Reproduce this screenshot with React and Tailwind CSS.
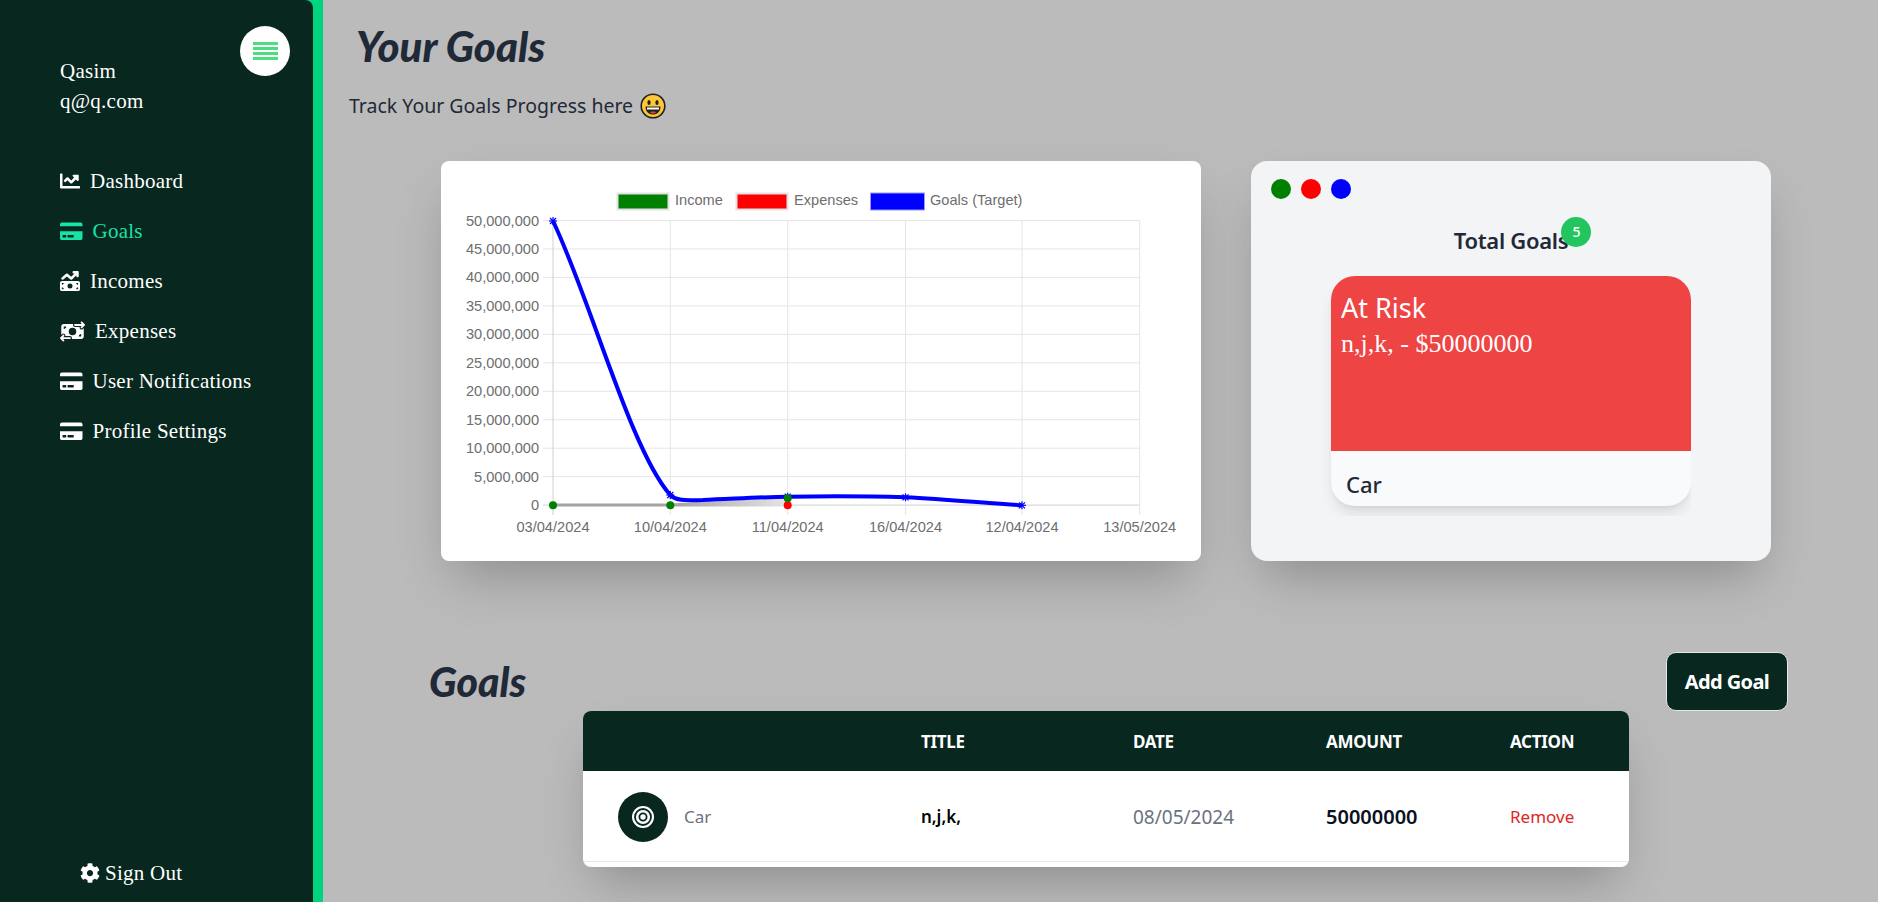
import { FaChartLine, FaCreditCard, FaCog } from "react-icons/fa";
import { FaMoneyBillTrendUp, FaMoneyBillTransfer } from "react-icons/fa6";

const navItems = [
    { label: "Dashboard", icon: FaChartLine, size: 20 },
    { label: "Goals", icon: FaCreditCard, size: 22.5, active: true },
    { label: "Incomes", icon: FaMoneyBillTrendUp, size: 20 },
    { label: "Expenses", icon: FaMoneyBillTransfer, size: 25 },
    { label: "User Notifications", icon: FaCreditCard, size: 22.5 },
    { label: "Profile Settings", icon: FaCreditCard, size: 22.5 },
];

const xTicks = [
    { x: 112, label: "03/04/2024" },
    { x: 229.3, label: "10/04/2024" },
    { x: 346.7, label: "11/04/2024" },
    { x: 464.5, label: "16/04/2024" },
    { x: 581, label: "12/04/2024" },
    { x: 698.7, label: "13/05/2024" },
];

const yTicks = ["50,000,000", "45,000,000", "40,000,000", "35,000,000", "30,000,000", "25,000,000", "20,000,000", "15,000,000", "10,000,000", "5,000,000", "0"];

const goalPoints = [
    [112, 60],
    [229.3, 334],
    [346.7, 335.7],
    [464.5, 336.3],
    [581, 344.3],
];

function Star({ x, y }) {
    return (
        <g stroke="#0000ff" strokeWidth="1.2">
            <line x1={x - 4} y1={y} x2={x + 4} y2={y} />
            <line x1={x} y1={y - 4} x2={x} y2={y + 4} />
            <line x1={x - 3} y1={y - 3} x2={x + 3} y2={y + 3} />
            <line x1={x - 3} y1={y + 3} x2={x + 3} y2={y - 3} />
        </g>
    );
}

function Chart() {
    return (
        <svg viewBox="0 0 760 400" className="block w-full h-full font-['Liberation_Sans',sans-serif] text-[14.6px]">
            <defs>
                <linearGradient id="fade" x1="0" x2="1" y1="0" y2="0">
                    <stop offset="0" stopColor="#a3a3a3" />
                    <stop offset="1" stopColor="#e5e5e5" />
                </linearGradient>
            </defs>

            {/* Legend */}
            <rect x="176.5" y="32.5" width="51" height="16" fill="#008000" stroke="#e3e3e3" strokeWidth="2" />
            <text x="234" y="44" fill="#6e6e6e">Income</text>
            <rect x="295.5" y="32.5" width="51" height="16" fill="#ff0000" stroke="#e3e3e3" strokeWidth="2" />
            <text x="353" y="44" fill="#6e6e6e">Expenses</text>
            <rect x="429.5" y="32" width="54" height="17" fill="#0000ff" stroke="#9999ff" strokeWidth="1" />
            <text x="489" y="44" fill="#6e6e6e">Goals (Target)</text>

            {/* Grid */}
            {yTicks.map((label, i) => {
                const y = 59.5 + i * 28.46;
                return (
                    <g key={label}>
                        <line x1="102" y1={y} x2="698.7" y2={y} stroke={i === 10 ? "#cfcfcf" : "#e5e5e5"} />
                        <text x="98" y={y + 5} textAnchor="end" fill="#6e6e6e">{label}</text>
                    </g>
                );
            })}
            {xTicks.map((t, i) => (
                <g key={t.label}>
                    <line x1={t.x} y1="59.5" x2={t.x} y2="354" stroke={i === 0 ? "#cfcfcf" : "#e5e5e5"} />
                    <text x={t.x} y="371" textAnchor="middle" fill="#6e6e6e">{t.label}</text>
                </g>
            ))}

            {/* Income / expenses lines */}
            <line x1="112" y1="344" x2="229.3" y2="344" stroke="#a3a3a3" strokeWidth="3" />
            <path d="M229.3 342.5 L346.7 336 L346.7 345.5 L229.3 345.5 Z" fill="url(#fade)" />
            <circle cx="112" cy="344.3" r="4" fill="#008000" />
            <circle cx="229.3" cy="344.3" r="4" fill="#008000" />
            <circle cx="346.7" cy="344.3" r="4" fill="#ff0000" />

            {/* Goals line */}
            <path
                d="M112 60 C 150 140, 190 290, 229.3 334 C 236 341, 250 339, 262 339 C 290 338, 320 336, 346.7 335.7 C 385 335, 425 335, 464.5 336.3 C 505 338.5, 545 342, 581 344.3"
                fill="none"
                stroke="#0000ff"
                strokeWidth="4"
            />
            {goalPoints.map(([x, y]) => (
                <Star key={x} x={x} y={y} />
            ))}
            <circle cx="346.7" cy="337.3" r="4" fill="#008000" />
        </svg>
    );
}

function Sidebar() {
    return (
        <aside className="w-[323px] shrink-0 h-full bg-[#00d47e] pr-[10px]">
            <div className="relative h-full bg-[#07271f] rounded-tr-lg flex flex-col text-white font-['Liberation_Serif',serif] text-[21px] tracking-[0.25px]">
                {/* Toggle */}
                <button className="absolute left-[240px] top-[26px] w-[50px] h-[50px] rounded-full bg-white flex flex-col items-center justify-center gap-[2px]">
                    <span className="w-[25px] h-[3px] bg-[#4ade80]" />
                    <span className="w-[25px] h-[3px] bg-[#4ade80]" />
                    <span className="w-[25px] h-[3px] bg-[#4ade80]" />
                    <span className="w-[25px] h-[3px] bg-[#4ade80]" />
                </button>

                {/* User */}
                <div className="pl-[60px] pt-[56px] leading-[30px]">
                    <p>Qasim</p>
                    <p>q@q.com</p>
                </div>

                {/* Nav */}
                <nav className="pl-[60px] pt-[40px] flex-1">
                    {navItems.map((item) => {
                        const Icon = item.icon;
                        return (
                            <a key={item.label} className={`h-[50px] flex items-center gap-[10px] ${item.active ? "text-[#17e3a6]" : "text-white"}`}>
                                <Icon size={item.size} className="shrink-0" />
                                <span className="pt-[2px]">{item.label}</span>
                            </a>
                        );
                    })}
                </nav>

                {/* Sign out */}
                <div className="pl-[80px] pb-[15px] h-[43px] flex items-center gap-[5px]">
                    <FaCog size={20} />
                    <span className="pt-px">Sign Out</span>
                </div>
            </div>
        </aside>
    );
}

function Emoji() {
    return (
        <svg viewBox="0 0 26 26" className="w-[26px] h-[26px] ml-[7px]">
            <circle cx="13" cy="13" r="11.8" fill="#fcc839" stroke="#222" strokeWidth="1.6" />
            <ellipse cx="9" cy="9.5" rx="1.6" ry="2.6" fill="#222" />
            <ellipse cx="17" cy="9.5" rx="1.6" ry="2.6" fill="#222" />
            <path d="M5.5 13.5 H20.5 C20.5 19 17 21.5 13 21.5 C9 21.5 5.5 19 5.5 13.5 Z" fill="#222" />
            <path d="M7 14.5 H19 V16.5 H7 Z" fill="#fff" />
            <path d="M10 19.5 C11 18.3 15 18.3 16 19.5 C15 20.8 11 20.8 10 19.5 Z" fill="#e0433a" />
        </svg>
    );
}

function GoalsCard() {
    return (
        <div className="w-[520px] h-[400px] bg-[#f3f4f6] rounded-2xl shadow-2xl">
            <div className="flex gap-[10px] pl-[20px] pt-[18px]">
                <span className="w-[20px] h-[20px] rounded-full bg-[#008000]" />
                <span className="w-[20px] h-[20px] rounded-full bg-[#ff0000]" />
                <span className="w-[20px] h-[20px] rounded-full bg-[#0000ff]" />
            </div>

            <div className="relative w-fit mx-auto mt-[25px] text-[22px] tracking-[-0.3px] leading-[32px] font-semibold text-[#1f2937]">
                Total Goals
                <span className="absolute -right-[23px] -top-[7px] w-[30px] h-[30px] rounded-full bg-[#22c55e] flex items-center justify-center text-white text-[14px] font-medium">5</span>
            </div>

            {/* Goal preview */}
            <div className="ml-[64px] mt-[20px] w-[376px] pl-[16px] pb-[10px] overflow-hidden">
                <div className="w-[360px] h-[230px] rounded-3xl overflow-hidden shadow-lg bg-[#f9fafb]">
                    <div className="h-[175px] bg-[#ef4444] text-white pl-[10px] pt-[12px]">
                        <p className="text-[27px] leading-[40px]">At Risk</p>
                        <p className="font-['Liberation_Serif',serif] text-[26px] leading-[32px]">n,j,k, - $50000000</p>
                    </div>
                    <p className="pl-[15px] pt-[18px] text-[22px] leading-[30px] font-medium text-[#1f2937]">Car</p>
                </div>
            </div>
        </div>
    );
}

function GoalsTable() {
    return (
        <div className="ml-[260px] w-[1046px] bg-white rounded-lg shadow-2xl overflow-hidden">
            <div className="h-[60px] pt-[2px] bg-[#07271f] text-white font-bold text-[17px] tracking-[-0.3px] uppercase grid grid-cols-[338px_212px_193px_184px_119px] items-center">
                <span />
                <span>Title</span>
                <span>Date</span>
                <span>Amount</span>
                <span>Action</span>
            </div>
            <div className="h-[91px] pt-[2px] border-b border-gray-200 grid grid-cols-[338px_212px_193px_184px_119px] items-center text-[17px]">
                <div className="flex items-center gap-[16px] pl-[35px]">
                    <span className="w-[50px] h-[50px] rounded-full bg-[#07271f] flex items-center justify-center">
                        <svg viewBox="0 0 24 24" className="w-[24px] h-[24px]">
                            <circle cx="12" cy="12" r="11" fill="#fff" />
                            <circle cx="12" cy="12" r="8" fill="none" stroke="#07271f" strokeWidth="1.8" />
                            <circle cx="12" cy="12" r="3.6" fill="none" stroke="#07271f" strokeWidth="1.8" />
                        </svg>
                    </span>
                    <span className="text-[#6b7280]">Car</span>
                </div>
                <span className="font-semibold text-black">n,j,k,</span>
                <span className="text-[#6b7280] text-[19px]">08/05/2024</span>
                <span className="font-semibold text-[#0b1120] text-[20px]">50000000</span>
                <span className="text-[#dc2626]">Remove</span>
            </div>
            <div className="h-[5px]" />
        </div>
    );
}

export default function App() {
    return (
        <div className="h-[902px] w-full flex overflow-hidden bg-[#bbbbbb] font-['Noto_Sans',sans-serif]">
            <Sidebar />

            <main className="flex-1 min-w-0">
                <h1 className="pl-[33px] pt-[20px] h-[90px] text-[42px] leading-[52px] font-black italic text-[#1f2937] font-['Lato',sans-serif]">Your Goals</h1>
                <p className="pl-[26px] h-[51px] flex items-center text-[19.5px] text-[#1f2937] -mt-[10px]">
                    Track Your Goals Progress here
                    <Emoji />
                </p>

                <div className="flex gap-[50px] ml-[118px] mt-[30px]">
                    <div className="w-[760px] h-[400px] bg-white rounded-lg shadow-2xl">
                        <Chart />
                    </div>
                    <GoalsCard />
                </div>

                <div className="flex justify-between items-center ml-[106px] mr-[90px] mt-[91px]">
                    <h2 className="text-[41px] leading-[52px] font-black italic text-[#1f2937] font-['Lato',sans-serif]">Goals</h2>
                    <button className="w-[122px] h-[59px] bg-[#07271f] border border-gray-200 rounded-[10px] text-white text-[20px] tracking-[-0.6px] font-bold">Add Goal</button>
                </div>

                <GoalsTable />
            </main>
        </div>
    );
}
